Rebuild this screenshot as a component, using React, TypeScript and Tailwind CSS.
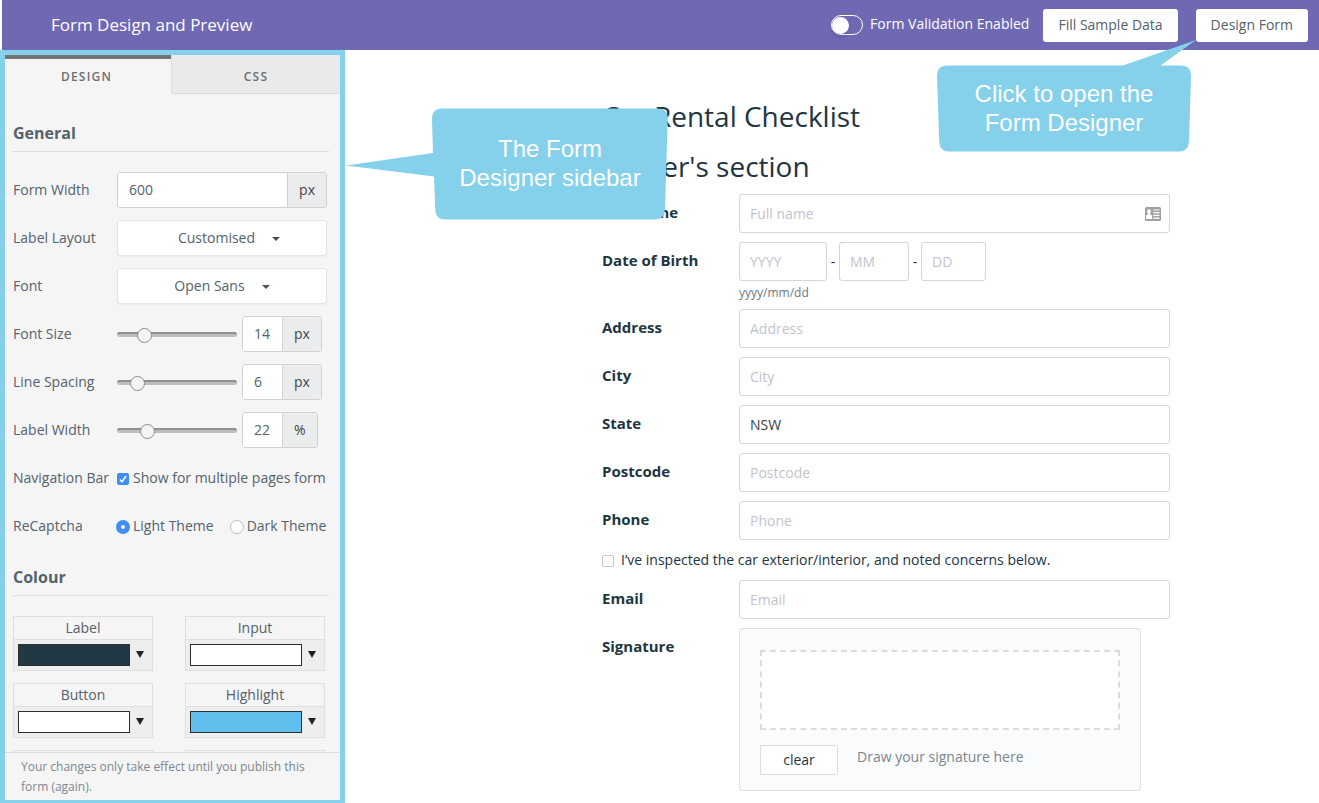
import { useState } from "react";
import type { ReactNode } from "react";

function Row({ label, htmlFor, children }: { label: string; htmlFor: string; children: ReactNode }) {
  return (
    <div className="flex h-12 items-center">
      <label htmlFor={htmlFor} className="w-26 shrink-0 whitespace-nowrap">
        {label}
      </label>
      {children}
    </div>
  );
}

function SectionTitle({ children }: { children: ReactNode }) {
  return (
    <h2 className="mr-[11px] border-b border-[#dcdcdc] pb-2 text-base leading-5 font-bold text-[#54626b]">{children}</h2>
  );
}

function Picker({ id, label, options, padded }: { id: string; label: string; options: string[]; padded?: boolean }) {
  return (
    <Row label={label} htmlFor={id}>
      <div
        className={`flex h-9 w-[210px] items-center justify-center gap-[17px] rounded-[3px] border border-[#e1e6e7] bg-white shadow-xs ${padded ? "pl-[14px]" : ""}`}
      >
        <select id={id} className="field-sizing-content cursor-pointer appearance-none bg-transparent text-center outline-none">
          {options.map((option) => (
            <option key={option}>{option}</option>
          ))}
        </select>
        <svg viewBox="0 0 8 4" className="mt-[2px] h-1 w-2 fill-[#46535b]" aria-hidden="true">
          <path d="M0 0h8L4 4z" />
        </svg>
      </div>
    </Row>
  );
}

function SliderRow({ id, label, initial, max, unit }: { id: string; label: string; initial: number; max: number; unit: string }) {
  const [value, setValue] = useState(initial);
  return (
    <Row label={label} htmlFor={id}>
      <input
        id={id}
        type="range"
        min={0}
        max={max}
        value={value}
        onChange={(e) => setValue(Number(e.target.value))}
        className="h-[5px] w-30 appearance-none rounded-full border-t-2 border-[#8f8f8f] bg-[#bdbdbd] [&::-webkit-slider-thumb]:size-[15px] [&::-webkit-slider-thumb]:appearance-none [&::-webkit-slider-thumb]:rounded-full [&::-webkit-slider-thumb]:border [&::-webkit-slider-thumb]:border-[#8c8c8c] [&::-webkit-slider-thumb]:bg-[#f4f4f4]"
      />
      <div className="ml-[5px] flex h-9 overflow-hidden rounded-[3px] border border-[#cfd1d3]">
        <input
          type="text"
          aria-label={`${label} value`}
          value={value}
          onChange={(e) => setValue(Number(e.target.value) || 0)}
          className="w-[39px] bg-white pl-[11px] outline-none"
        />
        <span className="flex items-center border-l border-[#cfd1d3] bg-[#ebecee] px-[11px] text-[#3f4448]">{unit}</span>
      </div>
    </Row>
  );
}

function Swatch({ label, color }: { label: string; color: string }) {
  return (
    <div className="w-[140px] border border-[#dfdfdf]">
      <div className="h-[22px] text-center leading-[22px]">{label}</div>
      <button
        type="button"
        aria-label={`${label} colour`}
        className="flex h-[31px] w-full items-center gap-[6px] border-t border-[#dfdfdf] bg-[#eeeeee] px-1"
      >
        <span className={`h-[22px] w-28 border border-[#2e2e2e] ${color}`} />
        <svg viewBox="0 0 8 7" className="mb-[2px] h-[7px] w-2 fill-[#222222]" aria-hidden="true">
          <path d="M0 0h8L4 7z" />
        </svg>
      </button>
    </div>
  );
}

function Sidebar() {
  return (
    <aside className="flex w-[345px] shrink-0 flex-col border-5 border-b-3 border-[#85d0eb] bg-[#f5f5f5] text-sm text-[#54626b]">
      <div role="tablist" className="flex h-[39px] shrink-0 text-xs font-semibold tracking-widest text-[#6f6f6f]">
        <button type="button" role="tab" aria-selected="true" className="w-[166px] border-t-4 border-[#757575] pr-[3px]">
          DESIGN
        </button>
        <button
          type="button"
          role="tab"
          aria-selected="false"
          className="flex-1 border-b border-l border-[#dcdcdc] bg-[#eaeaea] pt-[5px]"
        >
          CSS
        </button>
      </div>

      <div className="min-h-0 flex-1 overflow-hidden pt-[29px] pl-2">
        <SectionTitle>General</SectionTitle>
        <div className="pt-[14px]">
          <Row label="Form Width" htmlFor="form-width">
            <div className="flex h-9 w-[210px] overflow-hidden rounded-[3px] border border-[#cfd1d3]">
              <input id="form-width" defaultValue="600" className="min-w-0 flex-1 bg-white pl-[11px] outline-none" />
              <span className="flex items-center border-l border-[#cfd1d3] bg-[#ebecee] px-[11px] text-[#3f4448]">px</span>
            </div>
          </Row>
          <Picker id="label-layout" label="Label Layout" options={["Customised", "Left", "Top"]} padded />
          <Picker id="font" label="Font" options={["Open Sans", "Roboto", "Lato"]} />
          <SliderRow id="font-size" label="Font Size" initial={14} max={72} unit="px" />
          <SliderRow id="line-spacing" label="Line Spacing" initial={6} max={48} unit="px" />
          <SliderRow id="label-width" label="Label Width" initial={22} max={100} unit="%" />
          <Row label="Navigation Bar" htmlFor="navigation-bar">
            <label className="flex items-center gap-1 whitespace-nowrap">
              <span className="relative mt-[2px] flex size-3">
                <input
                  id="navigation-bar"
                  type="checkbox"
                  defaultChecked
                  className="peer size-3 appearance-none rounded-[2px] border border-[#bdbdbd] bg-white checked:border-[#3f8ef7] checked:bg-[#3f8ef7]"
                />
                <svg
                  viewBox="0 0 12 12"
                  className="pointer-events-none absolute inset-0 hidden size-3 fill-none stroke-white stroke-[1.6] peer-checked:block"
                  aria-hidden="true"
                >
                  <path d="M3 6.5l2 2.3L9 3" />
                </svg>
              </span>
              Show for multiple pages form
            </label>
          </Row>
          <div role="radiogroup" aria-label="ReCaptcha" className="flex h-12 items-center">
            <span className="w-[103px] shrink-0">ReCaptcha</span>
            <div className="flex gap-4 whitespace-nowrap">
              <label className="flex items-center gap-[3px]">
                <input
                  type="radio"
                  name="recaptcha"
                  defaultChecked
                  className="mt-[2px] size-[14px] appearance-none rounded-full border border-[#bdbdbd] bg-white checked:border-5 checked:border-[#3f8ef7]"
                />
                Light Theme
              </label>
              <label className="flex items-center gap-[3px]">
                <input
                  type="radio"
                  name="recaptcha"
                  className="mt-[2px] size-[14px] appearance-none rounded-full border border-[#bdbdbd] bg-white checked:border-5 checked:border-[#3f8ef7]"
                />
                Dark Theme
              </label>
            </div>
          </div>
        </div>

        <div className="pt-[17px]">
          <SectionTitle>Colour</SectionTitle>
          <div className="grid grid-cols-[140px_140px] gap-x-8 gap-y-3 pt-5">
            <Swatch label="Label" color="bg-[#233845]" />
            <Swatch label="Input" color="bg-white" />
            <Swatch label="Button" color="bg-white" />
            <Swatch label="Highlight" color="bg-[#60bfec]" />
            <div className="h-[55px] border border-[#dfdfdf]" />
            <div className="h-[55px] border border-[#dfdfdf]" />
          </div>
        </div>
      </div>

      <p className="shrink-0 border-t border-[#dcdcdc] px-4 pt-1 pb-[3px] text-xs leading-5 text-[#7c878e]">
        Your changes only take effect until you publish this form (again).
      </p>
    </aside>
  );
}

const boxed = "h-[39px] rounded-[3px] border border-[#d3d5d6] bg-white px-[10px] text-sm text-[#3c4043] placeholder-[#c2c4cb] outline-none";

function Field({ id, label, value, children }: { id: string; label: string; value?: string; children?: ReactNode }) {
  return (
    <div className="flex">
      <label htmlFor={id} className="w-[137px] shrink-0 pt-2 text-[15px] leading-5 font-bold">
        {label}
      </label>
      <div className="relative flex-1">
        <input id={id} placeholder={label === "Full Name" ? "Full name" : label} defaultValue={value} className={`w-full ${boxed}`} />
        {children}
      </div>
    </div>
  );
}

function RentalForm() {
  return (
    <form className="w-[568px] pt-[41px] text-[#213541]">
      <h1 className="text-[28px] leading-[50px]">Car Rental Checklist</h1>
      <h1 className="text-[28px] leading-[50px]">Renter's section</h1>
      <div className="flex flex-col gap-[9px] pt-[3px]">
        <Field id="full-name" label="Full Name">
          <svg viewBox="0 0 16 14" className="absolute top-[13px] right-[9px] h-[14px] w-4" aria-hidden="true">
            <rect width="16" height="14" rx="1.5" fill="#a0a0a0" />
            <path
              d="M4 2.200c1.200 0 1.900.9 1.900 2.100 0 .9-.3 1.700-.8 2.200v.8l1.500.9c.4.200.5.5.5.9V12H1V9.100c0-.4.100-.7.500-.9l1.400-.9v-.8c-.5-.5-.8-1.300-.8-2.200 0-1.200.7-2.100 1.900-2.100z"
              fill="#fff"
            />
            <path d="M8.200 3h6.300M8.200 5.700h6.300M8.200 8.400h6.300M8.200 11.100h6.300" stroke="#fff" strokeWidth="1.2" />
          </svg>
        </Field>
        <div className="flex">
          <label htmlFor="dob-year" className="w-[137px] shrink-0 pt-2 text-[15px] leading-5 font-bold">
            Date of Birth
          </label>
          <div>
            <div className="flex items-center">
              <input id="dob-year" placeholder="YYYY" className={`w-[88px] ${boxed}`} />
              <span className="w-3 text-center text-sm">-</span>
              <input aria-label="Month" placeholder="MM" className={`w-[70px] ${boxed}`} />
              <span className="w-3 text-center text-sm">-</span>
              <input aria-label="Day" placeholder="DD" className={`w-[65px] ${boxed}`} />
            </div>
            <p className="pt-[5px] text-xs leading-[14px] text-[#6d777d]">yyyy/mm/dd</p>
          </div>
        </div>
        <Field id="address" label="Address" />
        <Field id="city" label="City" />
        <Field id="state" label="State" value="NSW" />
        <Field id="postcode" label="Postcode" />
        <Field id="phone" label="Phone" />
        <label className="flex h-[22px] items-center gap-[7px] text-sm">
          <input
            type="checkbox"
            className="mt-[2px] size-3 appearance-none rounded-[2px] border border-[#c4c4c4] bg-white checked:bg-[#3f8ef7]"
          />
          I’ve inspected the car exterior/interior, and noted concerns below.
        </label>
        <Field id="email" label="Email" />
        <div className="flex">
          <span className="w-[137px] shrink-0 pt-2 text-[15px] leading-5 font-bold">Signature</span>
          <div className="w-[402px] rounded-[3px] border border-[#dee0e2] bg-[#fafbfd] px-5 pt-[21px] pb-[15px]">
            <canvas aria-label="Signature area" className="h-20 w-full border-2 border-dashed border-[#dcdcdc] bg-white" />
            <div className="flex gap-[19px] pt-[15px]">
              <button type="button" className="h-[30px] w-[78px] rounded-[1px] border border-[#dcdfe1] bg-white text-sm">
                clear
              </button>
              <span className="text-sm leading-6 text-[#7d868b]">Draw your signature here</span>
            </div>
          </div>
        </div>
      </div>
    </form>
  );
}

export default function App() {
  return (
    <div className="relative flex h-screen flex-col overflow-hidden bg-white font-['Open_Sans',sans-serif]">
      <header className="ml-[2px] flex h-[50px] shrink-0 items-center bg-[#6f68b3] pr-[11px] pl-[49px] text-white">
        <h1 className="flex-1 text-[17px]">Form Design and Preview</h1>
        <label className="mr-[14px] flex items-center gap-[7px] text-sm font-medium">
          <input type="checkbox" role="switch" className="peer sr-only" />
          <span className="flex h-5 w-8 items-center rounded-full border border-white peer-checked:justify-end">
            <span className="size-[17px] rounded-full bg-white shadow-md" />
          </span>
          <span className="pb-[3px]">Form Validation Enabled</span>
        </label>
        <button type="button" className="h-[33px] rounded-[3px] bg-white px-[15px] text-sm text-[#54626b]">
          Fill Sample Data
        </button>
        <button type="button" className="ml-[18px] h-[33px] rounded-[3px] bg-white px-[15px] text-sm text-[#54626b]">
          Design Form
        </button>
      </header>

      <div className="flex min-h-0 flex-1">
        <Sidebar />
        <main className="flex flex-1 justify-center overflow-hidden pl-[108px]">
          <RentalForm />
        </main>
      </div>

      <div className="pointer-events-none absolute top-[108px] left-[345px] flex h-[112px] w-[323px] items-center justify-center pb-[2px] pl-[87px]">
        <svg viewBox="0 0 323 112" className="absolute inset-0 size-full fill-[#85d0eb]" aria-hidden="true">
          <path d="M97 .5H313q10 0 9.700 10L320 101q-.4 10.500-10 10.500H100q-9.500 0-9.700-10L89 68.500 1 57.500 88 45 87 10.500q0-10 10-10z" />
        </svg>
        <p className="relative text-center font-['Liberation_Sans',sans-serif] text-2xl leading-[29px] text-white">
          The Form
          <br />
          Designer sidebar
        </p>
      </div>

      <div className="pointer-events-none absolute top-10 right-[128px] flex h-[112px] w-[254px] justify-center pt-[39px]">
        <svg viewBox="0 0 254 112" className="absolute inset-0 size-full overflow-visible fill-[#85d0eb]" aria-hidden="true">
          <path d="M10 25.500H186L259 0 223.500 25.500H244q10 0 10 10L252 101.500q-.5 10-10 10H12q-9.500 0-9.800-10L0 35.500q0-10 10-10z" />
        </svg>
        <p className="relative text-center font-['Liberation_Sans',sans-serif] text-2xl leading-[29px] text-white">
          Click to open the
          <br />
          Form Designer
        </p>
      </div>
    </div>
  );
}
